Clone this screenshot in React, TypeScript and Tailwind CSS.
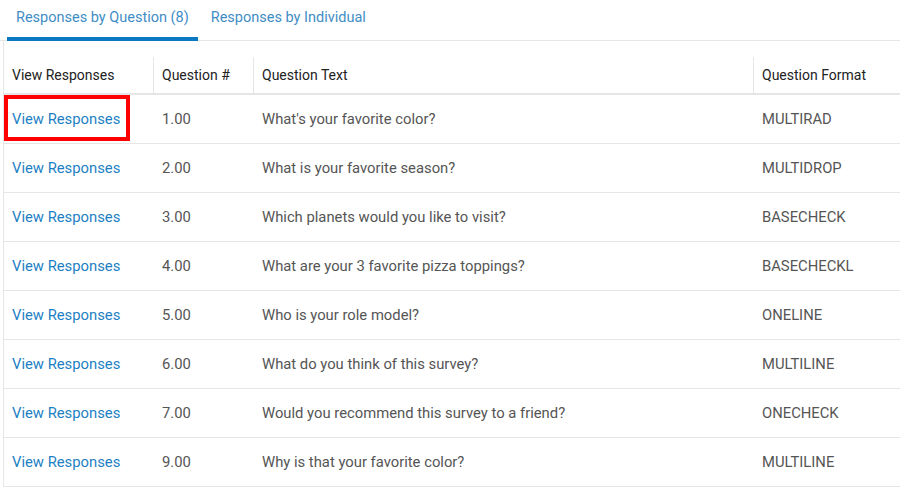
import React from "react";

const rows = [
  ["1.00", "What's your favorite color?", "MULTIRAD"],
  ["2.00", "What is your favorite season?", "MULTIDROP"],
  ["3.00", "Which planets would you like to visit?", "BASECHECK"],
  ["4.00", "What are your 3 favorite pizza toppings?", "BASECHECKL"],
  ["5.00", "Who is your role model?", "ONELINE"],
  ["6.00", "What do you think of this survey?", "MULTILINE"],
  ["7.00", "Would you recommend this survey to a friend?", "ONECHECK"],
  ["9.00", "Why is that your favorite color?", "MULTILINE"],
];

export default function App() {
  return (
    <div className="w-[900px] h-[495px] bg-white overflow-hidden font-['Roboto',sans-serif] text-[14.8px] leading-[20px]">
      <div className="h-[41px] flex pl-[7px] border-b border-[#e6e6e6] text-[14.5px]">
        <div className="h-[41px] px-[9px] pt-[8px] border-b-4 border-[#0a78c2] text-[#3f8dc6]">
          Responses by Question (8)
        </div>
        <div className="h-[41px] ml-[4px] px-[9px] pt-[8px] text-[#3f8dc6]">
          Responses by Individual
        </div>
      </div>
      <div className="ml-[3px] border-l border-[#e6e6e6]">
        <div className="flex h-[54px] border-b-2 border-[#e6e6e6] text-[#222] text-[14px]">
          <div className="w-[149px] pt-[16px]">
            <div className="h-full flex items-center pl-[8px]">View Responses</div>
          </div>
          <div className="w-[100px] pt-[16px]">
            <div className="h-full flex items-center pl-[8px] border-l border-[#e6e6e6]">Question #</div>
          </div>
          <div className="w-[500px] pt-[16px]">
            <div className="h-full flex items-center pl-[8px] border-l border-[#e6e6e6]">Question Text</div>
          </div>
          <div className="flex-1 pt-[16px]">
            <div className="h-full flex items-center pl-[8px] border-l border-[#e6e6e6]">Question Format</div>
          </div>
        </div>
        {rows.map((r, i) => (
          <div key={i} className="relative flex h-[49px] items-center border-b border-[#e6e6e6] text-[#555]">
            <div className="w-[149px] pl-[8px] text-[#1d7fc4]">View Responses</div>
            <div className="w-[100px] pl-[9px]">{r[0]}</div>
            <div className="w-[500px] pl-[9px]">{r[1]}</div>
            <div className="flex-1 pl-[9px]">{r[2]}</div>
            {i === 0 && (
              <div className="absolute left-0 top-0 w-[126px] h-[46px] border-4 border-[#ff0000]" />
            )}
          </div>
        ))}
      </div>
    </div>
  );
}
